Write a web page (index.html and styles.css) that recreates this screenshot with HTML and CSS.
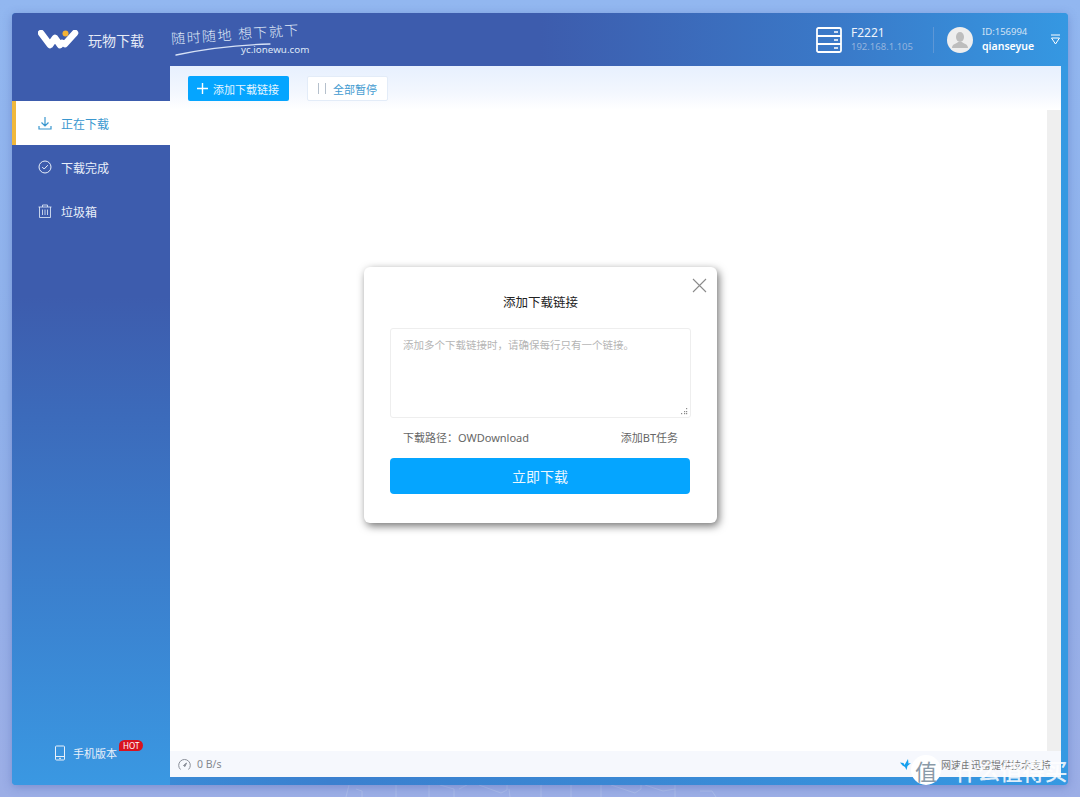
FILE: index.html
```html
<!DOCTYPE html>
<html lang="zh-CN">
<head>
    <meta charset="UTF-8">
    <title>玩物下载</title>
    <link rel="stylesheet" href="styles.css">
</head>
<body>

    <svg class="desk-lines" width="1080" height="12" viewBox="0 0 1080 12" fill="none" stroke="#abbce9" stroke-width="1">
        <path d="M349 0l-3 12M356 4l6 2v6M396 0v12M429 0v12M440 0l14 4v8M467 0l-8 4M479 0l22 8 6-3V0M510 12l-1-8M541 0v12M571 0v12M601 0v12M611 0l24 8 6-4V0M645 0l18 6 12-2M675 0v12M700 6h12l4 6"/>
    </svg>

    <div class="window">
        <header class="topbar">
            <div class="brand">
                <svg class="brand-logo" width="42" height="20" viewBox="0 0 42 20">
                    <path d="M3 3l9 12 5-7 5 7 2-2M27 14l10-11" fill="none" stroke="#fff" stroke-width="6.5" stroke-linecap="round" stroke-linejoin="round"/>
                    <circle cx="27.500" cy="3.500" r="3" fill="#f5b335"/>
                </svg>
                <span class="brand-name">玩物下载</span>
            </div>
            <div class="slogan">
                <span class="slogan-text">随时随地 想下就下</span>
                <svg class="slogan-stroke" width="100" height="14" viewBox="0 0 100 14">
                    <path d="M2 12C30 6 60 2 96 1" fill="none" stroke="#d7e2f6" stroke-width="1.300" stroke-linecap="round"/>
                </svg>
                <span class="slogan-url">yc.ionewu.com</span>
            </div>
            <div class="device">
                <svg width="26" height="26" viewBox="0 0 26 26" fill="none" stroke="#fff" stroke-width="1.800">
                    <rect x="1" y="1" width="24" height="24" rx="1.500"/>
                    <path d="M1 9h24M1 17h24"/>
                    <path d="M18 5h4M18 13h4M18 21h4" stroke-width="1.500"/>
                </svg>
                <div class="device-info">
                    <div class="device-name">F2221</div>
                    <div class="device-ip">192.168.1.105</div>
                </div>
            </div>
            <div class="user">
                <div class="avatar">
                    <svg width="18" height="18" viewBox="0 0 18 18" fill="#bdbdbd">
                        <ellipse cx="9" cy="6" rx="4" ry="5"/>
                        <path d="M1 17c0-4 4-4 6-6h4c2 2 6 2 6 6z"/>
                    </svg>
                </div>
                <div class="user-info">
                    <div class="user-id">ID:156994</div>
                    <div class="user-name">qianseyue</div>
                </div>
                <svg class="user-menu" width="11" height="11" viewBox="0 0 11 11" fill="none" stroke="#fff" stroke-width="1">
                    <path d="M1 1h9M1.500 4h8L5.500 10z"/>
                </svg>
            </div>
        </header>

        <div class="body-row">
            <nav class="sidebar">
                <a class="nav-item active">
                    <svg width="14" height="14" viewBox="0 0 14 14" fill="none" stroke="currentColor" stroke-width="1.200">
                        <path d="M7 1v8.500M3.500 6.500L7 10l3.500-3.500M1 10v3h12v-3"/>
                    </svg>
                    正在下载
                </a>
                <a class="nav-item">
                    <svg width="14" height="14" viewBox="0 0 14 14" fill="none" stroke="currentColor" stroke-width="1">
                        <circle cx="7" cy="7" r="6"/>
                        <path d="M4.200 7l2 2 3.600-3.800"/>
                    </svg>
                    下载完成
                </a>
                <a class="nav-item">
                    <svg width="14" height="14" viewBox="0 0 14 14" fill="none" stroke="currentColor" stroke-width="0.800">
                        <path d="M.5 3h13M4.500 3V1h5v2M1.500 3v10.500h11V3M4.500 5.500v5.500M7 5.500v5.500M9.500 5.500v5.500"/>
                    </svg>
                    垃圾箱
                </a>
                <a class="mobile-link">
                    <svg width="12" height="16" viewBox="0 0 12 16" fill="none" stroke="currentColor" stroke-width="1">
                        <rect x="1.500" y="1" width="9" height="14" rx="1"/>
                        <path d="M1.500 11.500h9M5 13.300h2"/>
                    </svg>
                    手机版本
                    <span class="hot-badge">HOT</span>
                </a>
            </nav>

            <main class="content">
                <div class="toolbar">
                    <button class="btn-add">
                        <svg width="11" height="11" viewBox="0 0 11 11" stroke="#fff" stroke-width="1.400">
                            <path d="M5.500 0v11M0 5.500h11"/>
                        </svg>
                        添加下载链接
                    </button>
                    <button class="btn-pause">
                        <svg width="8" height="11" viewBox="0 0 8 11" stroke="#b5c0cc" stroke-width="1">
                            <path d="M.5 0v11M7.500 0v11"/>
                        </svg>
                        全部暂停
                    </button>
                </div>
                <div class="list-area">
                    <div class="scroll-track"></div>
                </div>
                <footer class="statusbar">
                    <div class="speed">
                        <svg width="13" height="13" viewBox="0 0 13 13" fill="none" stroke="#8a8f99" stroke-width="1">
                            <path d="M2.500 11.500a5.800 5.800 0 1 1 8 0"/>
                            <path d="M5.500 7.500l3-2.500-1.500 3.500z" fill="#8a8f99"/>
                        </svg>
                        0 B/s
                    </div>
                    <div class="partner">
                        <svg width="11" height="11" viewBox="0 0 11 11" fill="#14a0ee">
                            <path d="M0 3.500l3.500.5L4.500 6 8 0l.5 4.500L11 4 7.500 7 6.500 11 5 8 2.500 6.500z"/>
                        </svg>
                        网速由迅雷提供技术支持
                    </div>
                </footer>
            </main>
        </div>

        <div class="modal">
            <svg class="modal-close" width="15" height="15" viewBox="0 0 15 15" stroke="#8b8b8b" stroke-width="1.100">
                <path d="M1 1l13 13M14 1L1 14"/>
            </svg>
            <h3 class="modal-title">添加下载链接</h3>
            <div class="link-box">
                <span class="link-placeholder">添加多个下载链接时，请确保每行只有一个链接。</span>
                <svg class="grip" width="7" height="7" viewBox="0 0 7 7" fill="#8a8a8a">
                    <rect x="5" y="0" width="1.200" height="1.200"/>
                    <rect x="3" y="3" width="1.200" height="1.200"/>
                    <rect x="5" y="3" width="1.200" height="1.200"/>
                    <rect x="0" y="5" width="1.200" height="1.200"/>
                    <rect x="3" y="5" width="1.200" height="1.200"/>
                    <rect x="5" y="5" width="1.200" height="1.200"/>
                </svg>
            </div>
            <div class="modal-row">
                <span>下载路径：OWDownload</span>
                <span>添加BT任务</span>
            </div>
            <button class="btn-start">立即下载</button>
        </div>
    </div>

    <div class="watermark">
        <span class="watermark-seal">值</span>
        <span class="watermark-text">什么值得买</span>
    </div>

</body>
</html>
```

FILE: styles.css
```css
* {
    box-sizing: border-box;
}
body {
    margin: 0;
    height: 797px;
    overflow: hidden;
    padding: 13px 12px 12px 12px;
    font-family: "Noto Sans", "Noto Sans CJK SC", sans-serif;
    background: linear-gradient(180deg, #92b7f0 0%, #8fb0ea 50%, #9caee6 100%);
}
.desk-lines {
    position: absolute;
    left: 0;
    top: 785px;
}
.window {
    position: relative;
    display: flex;
    flex-direction: column;
    height: 772px;
    border-radius: 4px;
    background: linear-gradient(90deg, #3a94dd 0%, #3b80cf 30%, #3a88d4 60%, #3599e2 100%);
    box-shadow: 0 2px 10px rgba(60, 80, 160, 0.35);
    padding-bottom: 8px;
    padding-right: 7px;
}
.topbar {
    display: flex;
    align-items: center;
    height: 53px;
    margin-right: -7px;
    padding-left: 26px;
    border-radius: 4px 4px 0 0;
    color: #fff;
    background: linear-gradient(90deg, #3d5cad 0%, #3d5cad 50%, #3a79c8 78%, #3598e2 100%);
}
.brand {
    display: flex;
    align-items: center;
    gap: 8px;
    width: 133px;
}
.brand-name {
    font-size: 14px;
    color: #e6ebf6;
}
.slogan {
    position: relative;
    width: 150px;
    height: 44px;
}
.slogan-text {
    position: absolute;
    left: 0;
    top: 10px;
    font-size: 14px;
    letter-spacing: 1.500px;
    white-space: nowrap;
    color: #dfe7f6;
    font-weight: 300;
    transform: rotate(-4deg);
    transform-origin: left center;
}
.slogan-stroke {
    position: absolute;
    left: 3px;
    top: 25px;
}
.slogan-url {
    position: absolute;
    left: 70px;
    top: 25px;
    font-size: 9.800px;
    color: #dfe7f6;
}
.device {
    display: flex;
    align-items: center;
    gap: 9px;
    margin-left: auto;
}
.device-info {
    width: 82px;
}
.device-name {
    font-size: 12px;
    line-height: 15px;
    color: #eef3fb;
}
.device-ip {
    font-size: 9.500px;
    line-height: 14px;
    color: #94b4de;
}
.user {
    display: flex;
    align-items: center;
    height: 26px;
    padding-left: 13px;
    border-left: 1px solid #5d97d6;
}
.avatar {
    display: flex;
    align-items: center;
    justify-content: center;
    width: 26px;
    height: 26px;
    border-radius: 50%;
    background: #eeeeee;
}
.user-info {
    margin-left: 9px;
    width: 68px;
}
.user-id {
    font-size: 9.500px;
    line-height: 14px;
    color: #d3e2f5;
}
.user-name {
    font-size: 10.500px;
    line-height: 15px;
    font-weight: 600;
    color: #fff;
}
.user-menu {
    margin-right: 7px;
}
.body-row {
    display: flex;
    flex: 1;
    min-height: 0;
}
.sidebar {
    display: flex;
    flex-direction: column;
    width: 158px;
    margin-bottom: -8px;
    padding-top: 35px;
    border-radius: 0 0 0 4px;
    color: #e9f0fa;
    background: linear-gradient(180deg, #3d5cad 0%, #3d5cad 32%, #3b79c8 65%, #3a98e2 100%);
}
.nav-item {
    display: flex;
    align-items: center;
    gap: 9px;
    height: 44px;
    padding: 2px 0 0 26px;
    font-size: 12px;
}
.nav-item svg {
    margin-top: -2px;
}
.nav-item.active {
    padding-left: 22px;
    border-left: 4px solid #f0b83c;
    color: #3a97cf;
    background: #fff;
}
.mobile-link {
    position: relative;
    display: flex;
    align-items: center;
    gap: 7px;
    margin-top: auto;
    margin-bottom: 24px;
    padding-left: 42px;
    font-size: 11px;
}
.hot-badge {
    position: absolute;
    left: 107px;
    top: -5px;
    padding: 0 4px;
    font-size: 8px;
    line-height: 11px;
    border-radius: 6px 6px 6px 0;
    color: #fff;
    background: #d8121f;
}
.content {
    display: flex;
    flex-direction: column;
    flex: 1;
    min-width: 0;
    background: #fff;
}
.toolbar {
    display: flex;
    align-items: flex-start;
    gap: 18px;
    height: 44px;
    padding: 10px 0 0 18px;
    background: linear-gradient(180deg, #e7f0fe 0%, #f3f7fe 60%, #fff 100%);
}
.toolbar button {
    display: flex;
    align-items: center;
    height: 25px;
    font-family: inherit;
    font-size: 11px;
    border-radius: 2px;
}
.btn-add {
    gap: 5px;
    width: 101px;
    padding: 0 0 0 9px;
    border: 0;
    color: #e4f5ff;
    background: #05a5ff;
}
.btn-pause {
    gap: 7px;
    width: 81px;
    padding: 0 0 0 10px;
    border: 1px solid #e3ecf8;
    color: #3f9ad0;
    background: #fff;
}
.list-area {
    display: flex;
    justify-content: flex-end;
    flex: 1;
    min-height: 0;
}
.scroll-track {
    width: 14px;
    background: #efefef;
}
.statusbar {
    display: flex;
    align-items: center;
    justify-content: space-between;
    height: 26px;
    padding: 0 10px 0 8px;
    font-size: 10.500px;
    color: #84888f;
    background: #f6f8fd;
}
.speed {
    display: flex;
    align-items: center;
    gap: 6px;
}
.partner {
    display: flex;
    align-items: center;
    gap: 30px;
    font-size: 10px;
    color: #777;
}
.modal {
    position: absolute;
    left: 352px;
    top: 254px;
    width: 353px;
    height: 256px;
    padding: 0 26px;
    border-radius: 6px;
    background: #fff;
    box-shadow: 2px 3px 8px rgba(0, 0, 0, 0.55);
}
.modal-close {
    position: absolute;
    right: 10px;
    top: 11px;
}
.modal-title {
    margin: 0;
    padding-top: 27px;
    height: 61px;
    text-align: center;
    font-size: 12.500px;
    line-height: 17px;
    font-weight: 400;
    color: #222;
}
.link-box {
    position: relative;
    height: 90px;
    padding: 3px 12px;
    border: 1px solid #eeeeee;
    border-radius: 3px;
}
.link-placeholder {
    font-size: 10.500px;
    line-height: 16px;
    color: #b5b5b5;
}
.grip {
    position: absolute;
    right: 2px;
    bottom: 2px;
}
.modal-row {
    display: flex;
    justify-content: space-between;
    align-items: center;
    height: 38px;
    margin-bottom: 2px;
    padding: 0 13px;
    font-size: 11px;
    color: #666;
}
.btn-start {
    display: block;
    width: 300px;
    height: 36px;
    border: 0;
    border-radius: 4px;
    font-family: inherit;
    font-size: 14px;
    color: #eaf7ff;
    background: #05a5ff;
}
.watermark {
    position: absolute;
    left: 911px;
    top: 755px;
    display: flex;
    align-items: center;
    height: 30px;
}
.watermark-seal {
    display: flex;
    align-items: center;
    justify-content: center;
    width: 30px;
    height: 30px;
    border-radius: 50%;
    font-size: 22px;
    color: #8a9aa8;
    background: #fff;
}
.watermark-text {
    margin-left: 14px;
    font-size: 22.500px;
    font-weight: 500;
    white-space: nowrap;
    color: rgba(255, 255, 255, 0.85);
}
```
